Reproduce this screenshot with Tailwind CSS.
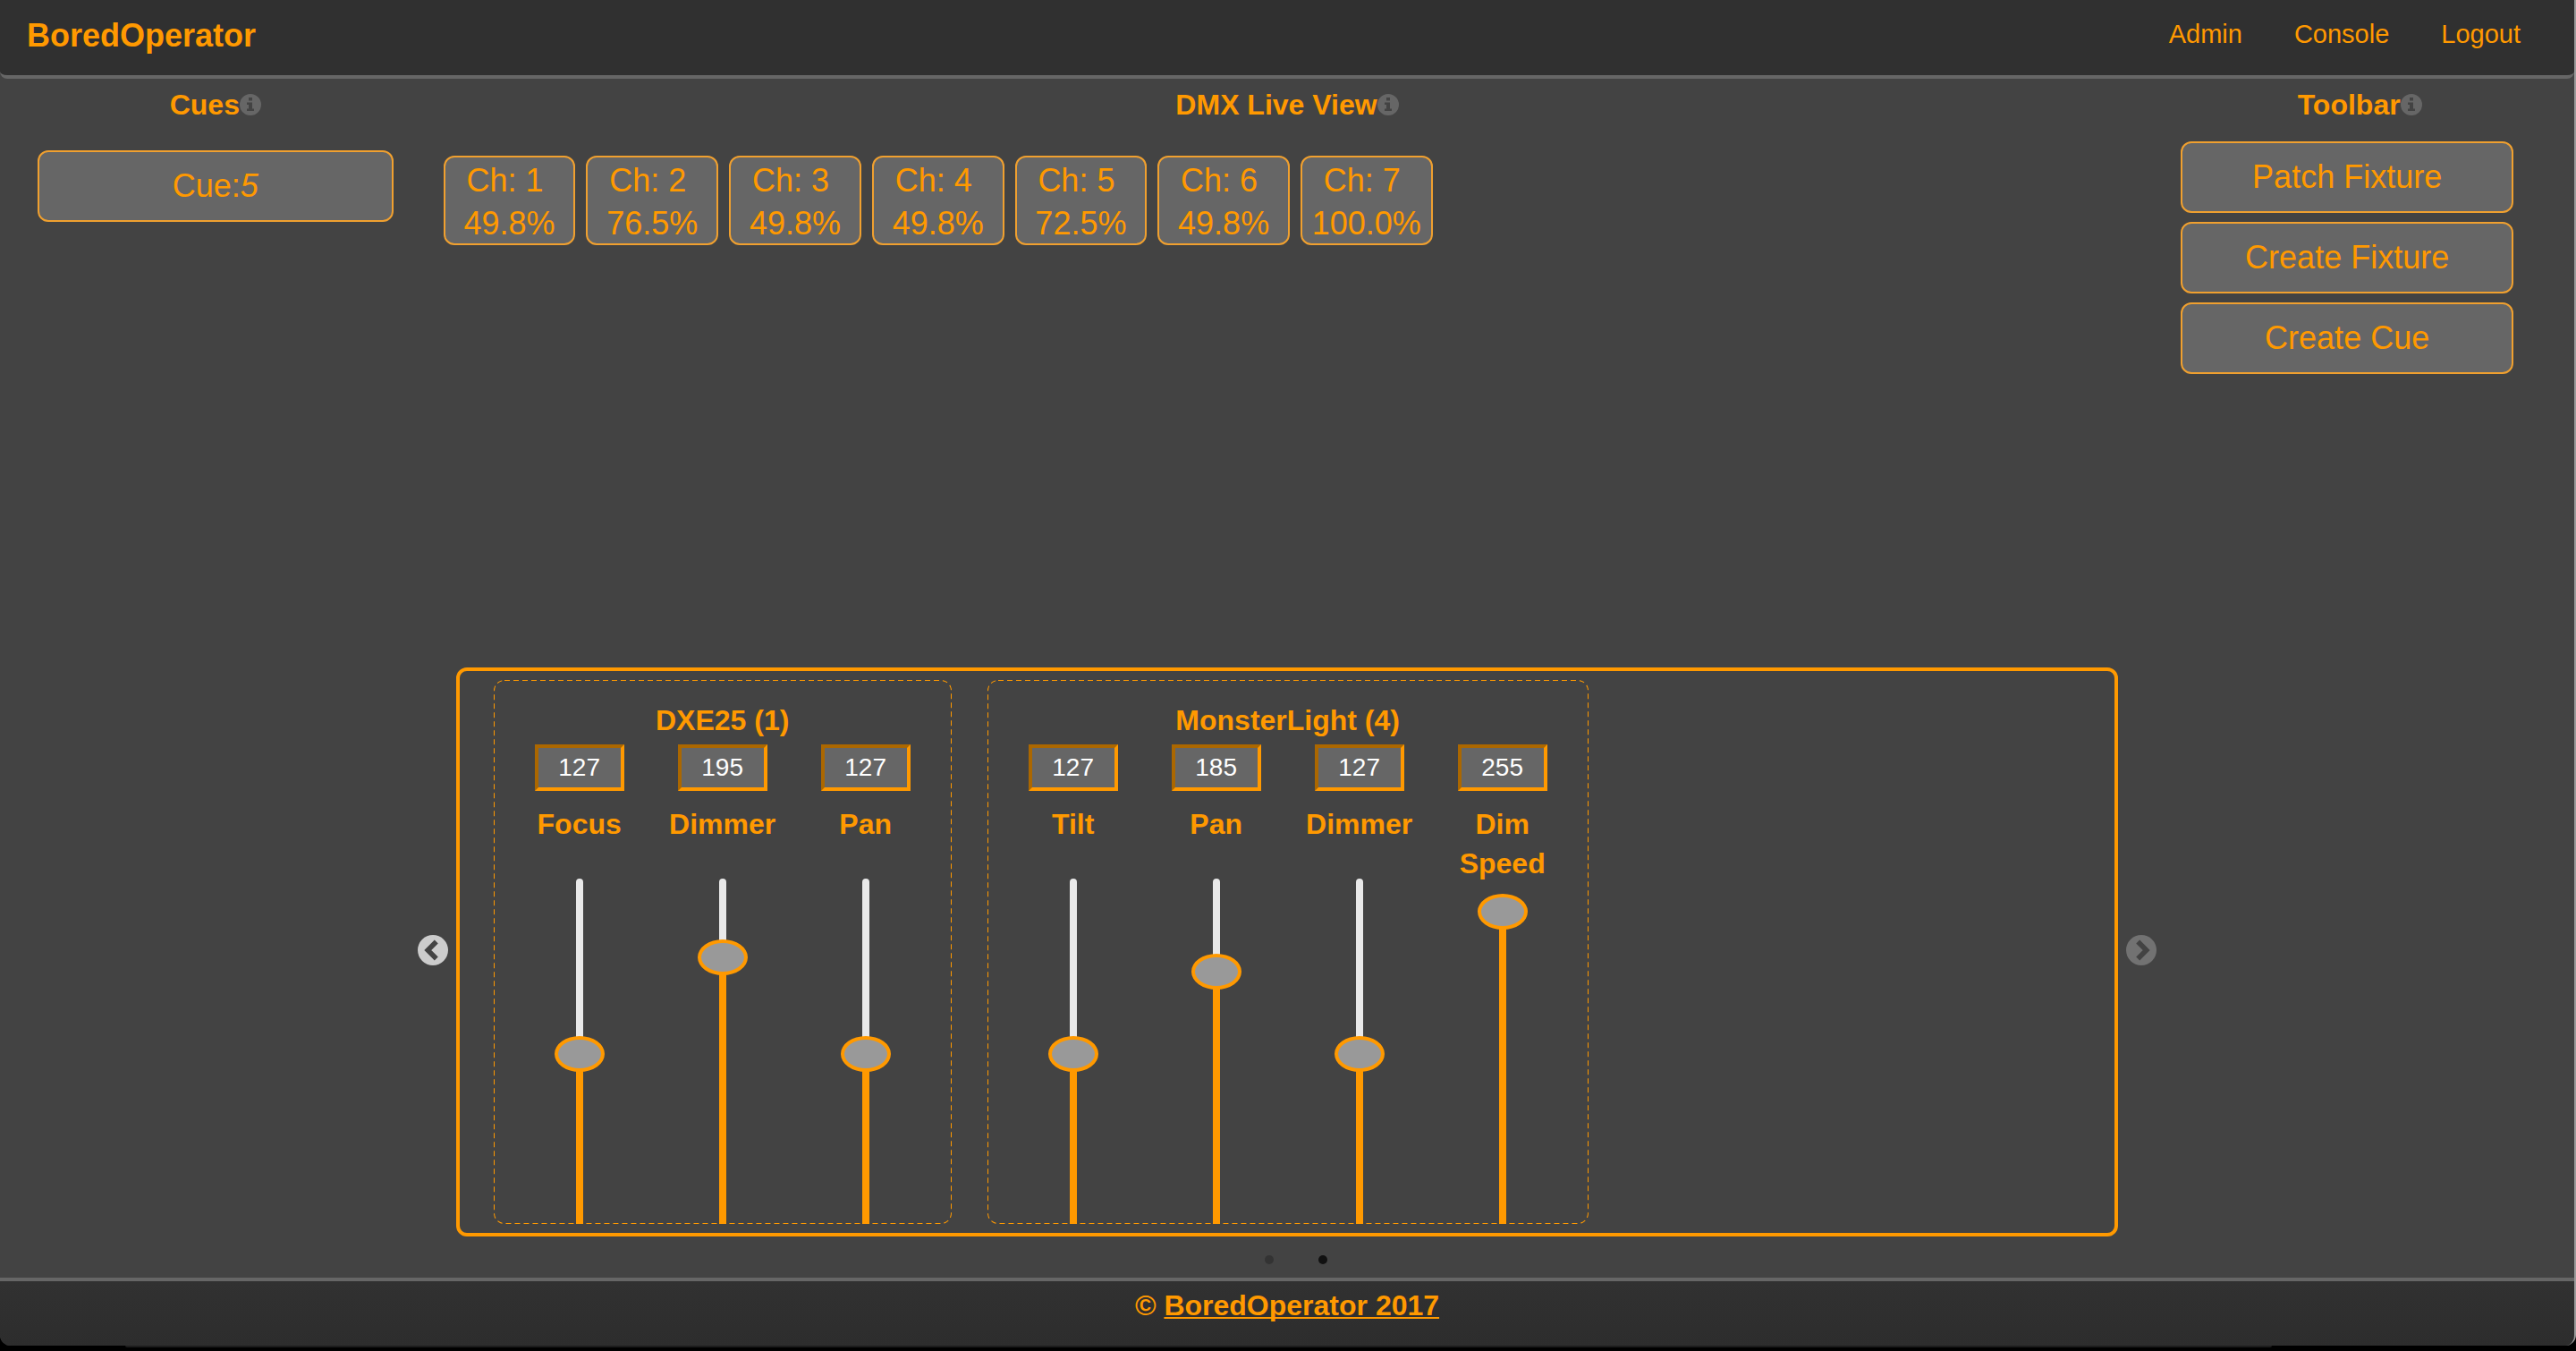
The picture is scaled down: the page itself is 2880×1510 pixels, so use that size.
<!DOCTYPE html>
<html lang="en">
<head>
<meta charset="utf-8">
<title>BoredOperator</title>
<script src="https://cdn.jsdelivr.net/npm/@tailwindcss/browser@4"></script>
</head>
<body class="flex min-h-screen flex-col bg-black pb-1 font-['Helvetica_Neue','Liberation_Sans',sans-serif] text-[#ff9900]">
<svg class="hidden" aria-hidden="true">
  <symbol id="info" viewBox="0 0 24 24"><path fill="#666" fill-rule="evenodd" d="M12 0a12 12 0 1 0 0 24a12 12 0 1 0 0-24zM10 4h4v3.500h-4zM8 9.500h6v7h2v2.500H8v-2.500h2v-4.500H8z"/></symbol>
</svg>
<div class="flex flex-1 flex-col overflow-hidden rounded-b-xl border-r-2 border-[#9a9a9a] bg-[#434343]">
  <header class="flex items-start justify-between rounded-b-lg border-b-4 border-[#666] bg-[#303030] pt-[18px] pr-[60px] pb-[22px] pl-[30px]">
    <a href="#" class="text-[36px] leading-[44px] font-bold">BoredOperator</a>
    <nav class="flex gap-[58px] text-[29px] leading-[40px]">
      <a href="#">Admin</a><a href="#">Console</a><a href="#">Logout</a>
    </nav>
  </header>

  <main class="grid flex-1 grid-cols-12 pt-[7px]">
    <section class="col-span-2 pr-10 pl-[42px]">
      <h2 class="flex items-center justify-center text-[32px] leading-[44px] font-bold">Cues<svg class="size-6"><use href="#info"/></svg></h2>
      <button class="mt-[29px] block h-20 w-full rounded-xl border-2 border-[#f0a02f] bg-[#666] text-[36px]">Cue:<i>5</i></button>
    </section>

    <section class="col-span-8">
      <h2 class="flex items-center justify-center text-[32px] leading-[44px] font-bold">DMX Live View<svg class="size-6"><use href="#info"/></svg></h2>
      <div class="-mr-2 ml-[10px] grid min-h-[607px] grid-cols-12 items-start pt-[35px] text-center text-[36px] leading-[48px]">
        <div class="mx-[6px] h-[100px] rounded-xl border-2 border-[#f0a02f] bg-[#666] pt-[2px]"><p>Ch: 1&nbsp;</p><p>49.8%</p></div>
        <div class="mx-[6px] h-[100px] rounded-xl border-2 border-[#f0a02f] bg-[#666] pt-[2px]"><p>Ch: 2&nbsp;</p><p>76.5%</p></div>
        <div class="mx-[6px] h-[100px] rounded-xl border-2 border-[#f0a02f] bg-[#666] pt-[2px]"><p>Ch: 3&nbsp;</p><p>49.8%</p></div>
        <div class="mx-[6px] h-[100px] rounded-xl border-2 border-[#f0a02f] bg-[#666] pt-[2px]"><p>Ch: 4&nbsp;</p><p>49.8%</p></div>
        <div class="mx-[6px] h-[100px] rounded-xl border-2 border-[#f0a02f] bg-[#666] pt-[2px]"><p>Ch: 5&nbsp;</p><p>72.5%</p></div>
        <div class="mx-[6px] h-[100px] rounded-xl border-2 border-[#f0a02f] bg-[#666] pt-[2px]"><p>Ch: 6&nbsp;</p><p>49.8%</p></div>
        <div class="mx-[6px] h-[100px] rounded-xl border-2 border-[#f0a02f] bg-[#666] pt-[2px]"><p>Ch: 7&nbsp;</p><p>100.0%</p></div>
      </div>

      <div class="relative mx-[30px]">
        <div class="pointer-events-none absolute -inset-x-[43px] inset-y-0 flex items-center justify-between pb-1">
          <button aria-label="Previous" class="pointer-events-auto size-[34px]"><svg viewBox="0 0 34 34"><circle cx="17" cy="17" r="17" fill="#ccc"/><path d="M20.800 7.500L11.300 17l9.500 9.500" fill="none" stroke="#434343" stroke-width="5.600"/></svg></button>
          <button aria-label="Next" class="pointer-events-auto size-[34px]"><svg viewBox="0 0 34 34"><circle cx="17" cy="17" r="17" fill="#727272"/><path d="M13.200 7.500l9.500 9.500l-9.500 9.500" fill="none" stroke="#434343" stroke-width="5.600"/></svg></button>
        </div>

        <div class="flex gap-10 rounded-xl border-4 border-[#ff9900] py-[10px] pl-[38px]">
          <fieldset class="relative flex h-[608px] flex-col px-4 pt-[23px]">
            <svg class="absolute inset-0 size-full overflow-hidden rounded-xl" aria-hidden="true"><rect width="100%" height="100%" rx="12" fill="none" stroke="#ff9900" stroke-width="2" stroke-dasharray="6 4"/></svg>
            <h3 class="text-center text-[32px] leading-[44px] font-bold">DXE25 (1)</h3>
            <div class="mt-[5px] flex min-h-0 flex-1" data-channels="Focus:127,Dimmer:195,Pan:127"></div>
          </fieldset>
          <fieldset class="relative flex h-[608px] flex-col px-4 pt-[23px]">
            <svg class="absolute inset-0 size-full overflow-hidden rounded-xl" aria-hidden="true"><rect width="100%" height="100%" rx="12" fill="none" stroke="#ff9900" stroke-width="2" stroke-dasharray="6 4"/></svg>
            <h3 class="text-center text-[32px] leading-[44px] font-bold">MonsterLight (4)</h3>
            <div class="mt-[5px] flex min-h-0 flex-1" data-channels="Tilt:127,Pan:185,Dimmer:127,Dim Speed:255"></div>
          </fieldset>
        </div>
      </div>
      <div class="flex h-[46px] items-start justify-center gap-[50px] pt-[21px] pl-5">
        <button aria-label="Slide 1" class="size-[10px] rounded-full bg-[#333]"></button>
        <button aria-label="Slide 2" class="size-[10px] rounded-full bg-[#111]"></button>
      </div>
    </section>

    <section class="col-span-2">
      <h2 class="flex items-center justify-center text-[32px] leading-[44px] font-bold">Toolbar<svg class="size-6"><use href="#info"/></svg></h2>
      <div class="mt-[19px] mr-[68px] ml-10 flex flex-col gap-[10px] text-[36px]">
        <button class="h-20 rounded-xl border-2 border-[#f0a02f] bg-[#666]">Patch Fixture</button>
        <button class="h-20 rounded-xl border-2 border-[#f0a02f] bg-[#666]">Create Fixture</button>
        <button class="h-20 rounded-xl border-2 border-[#f0a02f] bg-[#666]">Create Cue</button>
      </div>
    </section>
  </main>

  <footer class="h-[76px] border-t-4 border-[#666] bg-linear-to-b from-[#313131] to-[#2d2d2d] pt-[5px] text-center text-[32px] leading-[44px] font-bold">
    © <a href="#" class="underline decoration-2 underline-offset-2 [text-decoration-skip-ink:none]">BoredOperator 2017</a>
  </footer>
</div>
<div class="mr-[340px] ml-[140px] h-[2px] rounded-b-lg bg-[#1c1c1c]"></div>

<template id="fader">
  <div class="relative flex w-40 flex-col items-center">
    <input type="text" class="h-[52px] w-[100px] shrink-0 border-4 border-t-[#ab6700] border-r-[#ff9900] border-b-[#ff9900] border-l-[#ab6700] bg-[#666] text-center text-[28px] text-white">
    <label class="mt-[15px] w-32 text-center text-[32px] leading-[44px] font-bold"></label>
    <div class="relative mt-3 flex min-h-0 w-14 flex-1 justify-center overflow-hidden">
      <div class="mt-[27px] h-[418px] w-2 shrink-0 rounded-t bg-[#e9e9e9]"></div>
      <div class="absolute inset-x-0 top-0 flex h-[445px] items-end justify-center py-5"><span class="w-2 bg-[#ff9900]"></span></div>
      <input type="range" min="0" max="255" class="absolute top-0 left-0 h-[445px] w-14 appearance-none bg-transparent [direction:rtl] [writing-mode:vertical-lr] [&::-webkit-slider-thumb]:h-10 [&::-webkit-slider-thumb]:w-14 [&::-webkit-slider-thumb]:appearance-none [&::-webkit-slider-thumb]:rounded-[50%] [&::-webkit-slider-thumb]:border-4 [&::-webkit-slider-thumb]:border-[#ff9900] [&::-webkit-slider-thumb]:bg-[#999]">
    </div>
  </div>
</template>
<script>
  let n = 0;
  for (const row of document.querySelectorAll('[data-channels]')) {
    for (const item of row.dataset.channels.split(',')) {
      const [name, value] = item.split(':');
      const f = document.getElementById('fader').content.cloneNode(true);
      const [num, range] = f.querySelectorAll('input');
      const label = f.querySelector('label');
      const fill = f.querySelector('span');
      range.id = 'fader-' + (++n);
      label.htmlFor = range.id;
      label.textContent = name;
      num.setAttribute('aria-label', name + ' value');
      num.value = value;
      range.value = value;
      const draw = () => { fill.style.height = range.value / 2.55 + '%'; num.value = range.value; };
      range.addEventListener('input', draw);
      num.addEventListener('change', () => { range.value = num.value; draw(); });
      draw();
      row.append(f);
    }
  }
</script>
</body>
</html>
